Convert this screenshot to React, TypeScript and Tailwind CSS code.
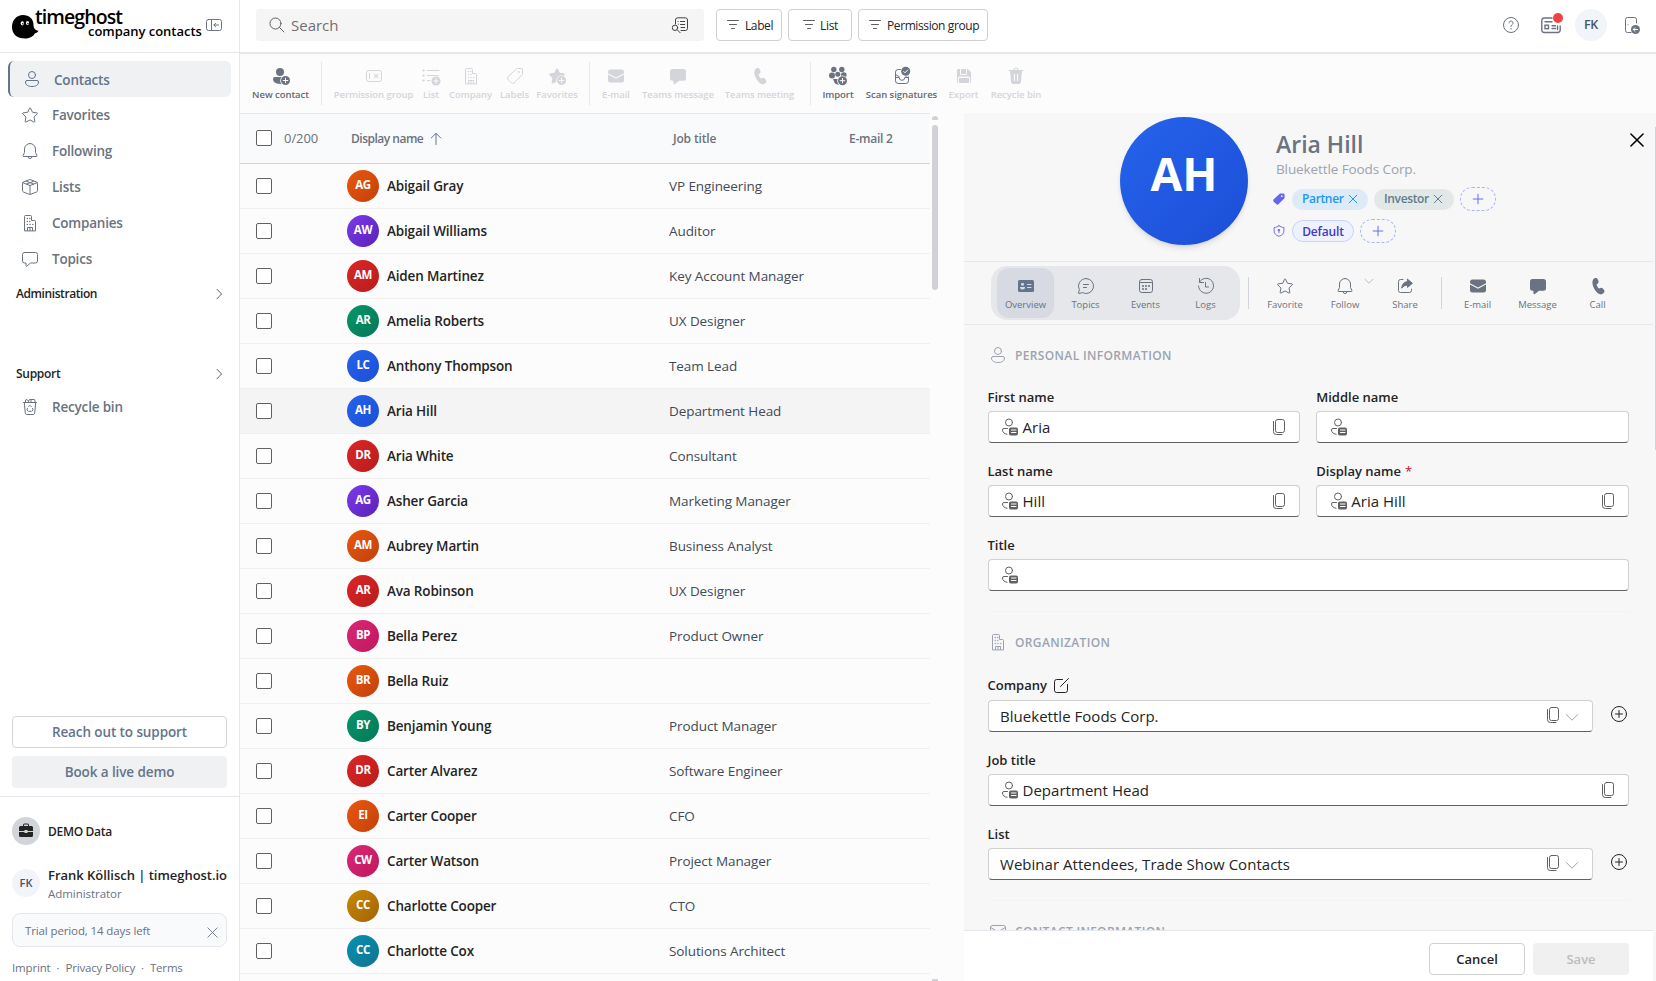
import React from "react";

type P = { className?: string; sw?: number; size?: number; children?: React.ReactNode };

function Svg({ className = "", sw = 1, size = 20, children }: P) {
  return (
    <svg
      width={size}
      height={size}
      viewBox="0 0 20 20"
      fill="none"
      stroke="currentColor"
      strokeWidth={sw}
      strokeLinecap="round"
      strokeLinejoin="round"
      className={`shrink-0 ${className}`}
    >
      {children}
    </svg>
  );
}

const solid = { fill: "currentColor", stroke: "none" };
const STAR =
  "M9.55 3.1a.5.5 0 0 1 .9 0l2.05 4.15 4.58.67a.5.5 0 0 1 .28.85L14.04 12l.79 4.56a.5.5 0 0 1-.73.53L10 14.94l-4.1 2.15a.5.5 0 0 1-.73-.53L5.96 12 2.64 8.77a.5.5 0 0 1 .28-.85l4.58-.67z";

const PersonI = (p: P) => (
  <Svg {...p}>
    <circle cx="10" cy="6" r="3.5" />
    <path d="M5 11.5h10a1.5 1.5 0 0 1 1.5 1.5c0 3-2.7 4.5-6.5 4.5S3.5 16 3.5 13A1.5 1.5 0 0 1 5 11.5z" />
  </Svg>
);
const StarI = (p: P) => (
  <Svg {...p}>
    <path d={STAR} />
  </Svg>
);
const BellI = (p: P) => (
  <Svg {...p}>
    <path d="M10 2.5a5.5 5.5 0 0 1 5.5 5.5v3.5l1.4 3a.7.7 0 0 1-.6 1H3.7a.7.7 0 0 1-.6-1l1.4-3V8A5.5 5.5 0 0 1 10 2.5z" />
    <path d="M8 15.6a2 2 0 0 0 4 0" />
  </Svg>
);
const BoxI = (p: P) => (
  <Svg {...p}>
    <path d="M9.3 2.7a2 2 0 0 1 1.4 0l5.9 2.3c.5.2.9.7.9 1.3v7.4c0 .6-.4 1.1-.9 1.3l-5.9 2.3a2 2 0 0 1-1.4 0L3.4 15c-.5-.2-.9-.7-.9-1.3V6.3c0-.6.4-1.1.9-1.3z" />
    <path d="M2.8 5.7 10 8.5l7.2-2.8M10 8.5v8.9M6.2 4.1l7.3 2.9M6.5 7.1l7.1-2.8" />
  </Svg>
);
const BuildingI = (p: P) => (
  <Svg {...p}>
    <path d="M4.5 17.5v-14a1 1 0 0 1 1-1h5a1 1 0 0 1 1 1v4h3a1 1 0 0 1 1 1v9z" />
    <path d="M7.5 17.5v-3h5v3M10 14.5v3" />
    <g {...solid}>
      <circle cx="7.3" cy="5.5" r=".75" />
      <circle cx="7.3" cy="8.5" r=".75" />
      <circle cx="7.3" cy="11.5" r=".75" />
      <circle cx="9.8" cy="8.5" r=".75" />
      <circle cx="9.8" cy="5.5" r=".75" />
      <circle cx="10" cy="11.5" r=".75" />
      <circle cx="12.8" cy="11.5" r=".75" />
    </g>
  </Svg>
);
const CommentI = (p: P) => (
  <Svg {...p}>
    <path d="M4.5 3.5h11a2 2 0 0 1 2 2v6.5a2 2 0 0 1-2 2h-5l-3.7 3.2a.5.5 0 0 1-.8-.4V14H4.5a2 2 0 0 1-2-2V5.5a2 2 0 0 1 2-2z" />
  </Svg>
);
const CommentSolid = (p: P) => (
  <Svg {...p}>
    <path
      {...solid}
      d="M4.5 3h11A2.5 2.5 0 0 1 18 5.5v6.7a2.5 2.5 0 0 1-2.5 2.5h-4.4l-4.2 3.2a1 1 0 0 1-1.5-.8v-2.4h-.9A2.5 2.5 0 0 1 2 12.2V5.5A2.5 2.5 0 0 1 4.5 3z"
    />
  </Svg>
);
const BinI = (p: P) => (
  <Svg {...p}>
    <path d="M3.5 5.5h13M4.3 5.5l1 10.7a1.5 1.5 0 0 0 1.5 1.3h6.4a1.5 1.5 0 0 0 1.5-1.3l1-10.7" />
    <path d="M5.5 5.2V3l1.5-.5 1.5 1.7M8 5.2l1.5-2.7H14a1 1 0 0 1 1 1v1.7M11 2.7V5" />
    <path d="M8.7 9.6 10 8.3l1.3 1.3M7.5 11.3l-.6 1.6.9 1.1M12.5 11.3l.6 1.6-.9 1.1M8.8 14.3h2.4" />
  </Svg>
);
const ChevR = (p: P) => (
  <Svg {...p}>
    <path d="m8 5.3 4.6 4.7L8 14.7" />
  </Svg>
);
const ChevD = (p: P) => (
  <Svg {...p}>
    <path d="m4.3 7.5 5.7 5.7 5.7-5.7" />
  </Svg>
);
const XI = (p: P) => (
  <Svg {...p}>
    <path d="m4.5 4.5 11 11M15.5 4.5l-11 11" />
  </Svg>
);
const PlusI = (p: P) => (
  <Svg {...p}>
    <path d="M10 4v12M4 10h12" />
  </Svg>
);
const PanelI = (p: P) => (
  <Svg {...p}>
    <rect x="2.5" y="4.5" width="15" height="11" rx="2" />
    <path d="M7.5 4.5v11M14.5 10H10M11.6 8.3 9.9 10l1.7 1.7" />
  </Svg>
);
const SearchI = (p: P) => (
  <Svg {...p}>
    <circle cx="8.5" cy="8.5" r="5.5" />
    <path d="m12.5 12.5 4.5 4.5" />
  </Svg>
);
const SearchListI = (p: P) => (
  <Svg {...p}>
    <path d="M5.5 9V5a2.2 2.2 0 0 1 2.2-2.2h7.6A2.2 2.2 0 0 1 17.5 5v8.3a2.2 2.2 0 0 1-2.2 2.2H11" />
    <path d="M10.5 6.5h4.2M10.5 9.5h4.2M11 12.5h3.7M8 6.5h.1M8.2 9.2h.1" />
    <circle cx="5" cy="12.8" r="2.7" />
    <path d="m7.2 14.8 3 3" />
  </Svg>
);
const FilterI = (p: P) => (
  <Svg {...p}>
    <path d="M4.5 5.5h11M6.5 9.5h7M8.5 13.5h3" />
  </Svg>
);
const HelpI = (p: P) => (
  <Svg {...p}>
    <circle cx="10" cy="10" r="7.5" />
    <path d="M8 8a2 2 0 1 1 3.2 1.6c-.7.6-1.2 1-1.2 1.9" />
    <circle cx="10" cy="13.7" r=".7" {...solid} />
  </Svg>
);
const IdI = (p: P) => (
  <Svg {...p}>
    <rect x="2.5" y="4.5" width="15" height="11" rx="2.2" />
    <path d="M5.5 7.5v5" />
    <rect x="10.5" y="8.5" width="3.5" height="3" {...solid} opacity=".75" />
    <path d="M10 7.9l.6.6M14.5 7.9l-.6.6M10 12.1l.6-.6M14.5 12.1l-.6-.6" />
  </Svg>
);
const Badge = ({ bg = "#fcfcfc", cx = 15, cy = 14.5 }: { bg?: string; cx?: number; cy?: number }) => (
  <g>
    <circle cx={cx} cy={cy} r="5.3" fill={bg} stroke="none" />
    <circle cx={cx} cy={cy} r="4.5" fill="currentColor" stroke="none" />
    <path d={`M${cx - 2.3} ${cy}h4.6M${cx} ${cy - 2.3}v4.6`} stroke={bg} />
  </g>
);
const PersonAdd = (p: P) => (
  <Svg {...p}>
    <circle cx="9" cy="6" r="4" {...solid} />
    <path {...solid} d="M4 11h11v6.7c-5 1.2-13 .3-13-4.7a2 2 0 0 1 2-2z" />
    <Badge cx={14.5} cy={14.5} />
  </Svg>
);
const ListAdd = (p: P) => (
  <Svg {...p}>
    <path d="M6.5 4.5H18M6.5 9.5H17M6.5 14.5H9" strokeWidth="1.2" />
    <path d="M2.3 4.5h.4M2.3 9.5h.4M2.3 14.5h.4" strokeWidth="2" />
    <Badge cx={15} cy={15} />
  </Svg>
);
const TagI = (p: P) => (
  <Svg {...p}>
    <path d="M11.4 2.9a1.5 1.5 0 0 1 1-.4h4.1a1 1 0 0 1 1 1v4.1c0 .4-.2.8-.4 1.1l-8 8.1a2 2 0 0 1-2.9 0L3 13.5a2 2 0 0 1 0-2.8z" />
    <circle cx="14" cy="6" r=".9" {...solid} />
  </Svg>
);
const TagSolid = (p: P) => (
  <Svg {...p}>
    <path
      fillRule="evenodd"
      {...solid}
      d="M11 2.5c.3-.3.8-.5 1.3-.5H16a2 2 0 0 1 2 2v4c0 .5-.2.9-.5 1.3l-8 8a2.5 2.5 0 0 1-3.5 0l-3.500-3.500a2.500 2.500 0 0 1 0-3.500zM14 7.200a1.200 1.200 0 1 0 0-2.400 1.200 1.200 0 0 0 0 2.400z"
    />
  </Svg>
);
const StarAdd = (p: P) => (
  <Svg {...p}>
    <path d={STAR} fill="currentColor" />
    <Badge cx={14.5} cy={14.5} />
  </Svg>
);
const MailSolid = (p: P) => (
  <Svg {...p}>
    <path {...solid} d="M2 7.2V6a2.5 2.5 0 0 1 2.5-2.5h11A2.5 2.5 0 0 1 18 6v1.2l-8 4.3z" />
    <path {...solid} d="M2 8.4v5.6a2.5 2.5 0 0 0 2.5 2.5h11A2.5 2.5 0 0 0 18 14V8.4l-8 4.3z" />
  </Svg>
);
const MailI = (p: P) => (
  <Svg {...p}>
    <rect x="2.5" y="4.5" width="15" height="11" rx="2" />
    <path d="m2.7 6.5 7.3 4.3 7.3-4.3" />
  </Svg>
);
const PhoneSolid = (p: P) => (
  <Svg {...p}>
    <path
      {...solid}
      d="m6.06 2.4.99-.3c1.1-.33 2.2.2 2.64 1.2l.7 1.56c.38.86.18 1.9-.5 2.53L8.6 8.6c-.1.1.3 1.1.9 2.1.6 1 1.2 1.7 1.4 1.7l1.7-.5c.9-.3 1.8 0 2.4.8l1.03 1.4c.65.86.53 2.08-.27 2.8l-.75.7a3 3 0 0 1-2.86.7c-2.14-.6-4.06-2.4-5.78-5.4C4.64 9.9 4.05 7.3 4.59 5.1a3 3 0 0 1 1.47-2.7z"
    />
  </Svg>
);
const PeopleAdd = (p: P) => (
  <Svg {...p}>
    <g {...solid}>
      <circle cx="5.8" cy="3.5" r="2.7" />
      <circle cx="13.8" cy="3.5" r="2.7" />
      <circle cx="9.8" cy="8.3" r="2.5" />
      <circle cx="4" cy="9.5" r="3" />
      <circle cx="15.8" cy="9" r="2.8" />
      <path d="M5 13h9v5.5c-4 1-7.5-.5-8-3z" />
    </g>
    <Badge cx={14.5} cy={14.7} />
  </Svg>
);
const ScanI = (p: P) => (
  <Svg {...p}>
    <path d="M9 3.5H6.2A2.7 2.7 0 0 0 3.5 6.2v8.6a2.7 2.7 0 0 0 2.7 2.7h7.6a2.7 2.7 0 0 0 2.7-2.7V11M3.5 11.5h3.7a2.8 2.8 0 0 0 5.6 0h3.7" />
    <path d="M3.8 8.8 7 10.500M16.200 9.500 13.500 10.700" />
    <circle cx="13.7" cy="5.3" r="5.2" fill="#fcfcfc" stroke="none" />
    <circle cx="13.7" cy="5.3" r="4.5" {...solid} />
    <path d="m11.7 5.5 1.3 1.3 2.7-2.8" stroke="#fcfcfc" />
  </Svg>
);
const SaveI = (p: P) => (
  <Svg {...p}>
    <path
      {...solid}
      d="M3 4.5A1.5 1.5 0 0 1 4.5 3H6v4.5A1.5 1.5 0 0 0 7.5 9h4A1.5 1.5 0 0 0 13 7.5V3h.8L17 6v9.500a1.500 1.500 0 0 1-1 1.500v-5a1.500 1.500 0 0 0-1.500-1.500h-9A1.500 1.500 0 0 0 4 12v5a1.500 1.500 0 0 1-1-1.500zM7 3h5v4.500a.5.5 0 0 1-.5.5h-4a.5.5 0 0 1-.5-.5zM5 12.500a.5.5 0 0 1 .5-.5h9a.5.5 0 0 1 .5.5V17H5z"
    />
  </Svg>
);
const TrashSolid = (p: P) => (
  <Svg {...p}>
    <path d="M8 4a2 2 0 0 1 4 0M3 4.5h14" strokeWidth="1.2" />
    <path fillRule="evenodd" {...solid} d="M4 5h12l-1.1 11a2.2 2.2 0 0 1-2.2 2H7.3a2.2 2.2 0 0 1-2.2-2zm4 3v7h1V8zm3 0v7h1V8z" />
  </Svg>
);
const CardSolid = (p: P) => (
  <Svg {...p}>
    <rect x="2" y="4" width="16" height="12" rx="1.5" {...solid} />
    <g fill="#d7dae2" stroke="none">
      <circle cx="6.5" cy="8.3" r="1.5" />
      <path d="M4 11h5c.2 1.7-1 2.5-2.5 2.5S3.8 12.7 4 11z" />
    </g>
    <path d="M11.5 8.5h3.5M11.5 11.5h3.5" stroke="#d7dae2" />
  </Svg>
);
const ChatI = (p: P) => (
  <Svg {...p}>
    <path d="M10 2.5a7.5 7.5 0 1 1-3.5 14.1l-3.6.9a.3.3 0 0 1-.4-.4l.9-3.6A7.5 7.5 0 0 1 10 2.5zM7.5 8.5h5M7.5 11.5h3" />
  </Svg>
);
const CalI = (p: P) => (
  <Svg {...p}>
    <rect x="3.5" y="3.5" width="13" height="13" rx="2.2" />
    <path d="M3.5 6.5h13" />
    <g {...solid} opacity=".75">
      <rect x="6" y="9" width="2" height="2" />
      <rect x="9" y="9" width="2" height="2" />
      <rect x="12" y="9" width="2" height="2" />
      <rect x="6" y="12" width="2" height="2" />
      <rect x="9" y="12" width="2" height="2" />
    </g>
  </Svg>
);
const HistoryI = (p: P) => (
  <Svg {...p}>
    <path d="M3.5 6A7.5 7.5 0 1 1 2.5 10M3.5 2.5v4h4M9.5 6.5v4.5h3" />
  </Svg>
);
const ShareI = (p: P) => (
  <Svg {...p}>
    <path d="M8 3.5H5.5a2 2 0 0 0-2 2v9a2 2 0 0 0 2 2h9a2 2 0 0 0 2-2v-1.3" />
    <path
      {...solid}
      stroke="currentColor"
      d="m12.5 3.2 4.9 4.1-4.9 4.1V9.2c-2.6 0-4.3 1-5.8 3 .3-4 2.3-6.3 5.8-6.7z"
    />
  </Svg>
);
const ShieldI = (p: P) => (
  <Svg {...p}>
    <path d="M10 2.5c2 1.5 4.2 2.2 7 2.5v5c0 3.7-2.3 6-7 7.6C5.3 16 3 13.7 3 10V5c2.8-.3 5-1 7-2.5z" />
    <path d="M10 8v4.5M9.2 8h1.6v1.5H9.2z" />
  </Svg>
);
const PersonCardI = (p: P) => (
  <Svg {...p}>
    <circle cx="9" cy="5.5" r="3.5" />
    <path d="M7.5 11.5H4A1.5 1.5 0 0 0 2.5 13c0 2.3 1.9 3.9 4.6 4.3" />
    <rect x="9" y="10.5" width="9" height="8" rx="1.8" {...solid} />
    <path d="M11.5 13h4.5M11.5 15.5h4.5" stroke="#fff" />
  </Svg>
);
const CopyI = (p: P) => (
  <Svg {...p}>
    <rect x="6.5" y="2.5" width="9" height="13" rx="2" />
    <path d="M4.5 4.5v10.2a2.8 2.8 0 0 0 2.8 2.8H13" />
  </Svg>
);
const EditI = (p: P) => (
  <Svg {...p}>
    <path d="M11.5 3.5H5.7a2.2 2.2 0 0 0-2.2 2.2v8.6a2.2 2.2 0 0 0 2.2 2.2h8.6a2.2 2.2 0 0 0 2.2-2.2V8.5M9.5 10.5l8-8" />
  </Svg>
);
const AddCircleI = (p: P) => (
  <Svg {...p}>
    <circle cx="10" cy="10" r="7.5" />
    <path d="M10 6.5v7M6.5 10h7" />
  </Svg>
);
const ArrowUpI = (p: P) => (
  <Svg {...p}>
    <path d="M10 4.5V15.5M5.3 9 10 4.3 14.7 9" />
  </Svg>
);

const nav: [string, (p: P) => React.JSX.Element][] = [
  ["Favorites", StarI],
  ["Following", BellI],
  ["Lists", BoxI],
  ["Companies", BuildingI],
  ["Topics", CommentI],
];

const O = "from-[#ea580c] to-[#c2410c]";
const V = "from-[#7c3aed] to-[#5b21b6]";
const R = "from-[#dc2626] to-[#b91c1c]";
const G = "from-[#059669] to-[#047857]";
const B = "from-[#2563eb] to-[#1d4ed8]";
const K = "from-[#db2777] to-[#be185d]";
const Y = "from-[#ca8a04] to-[#a16207]";
const C = "from-[#0891b2] to-[#0e7490]";
const rows: [string, string, string, string][] = [
  ["AG", O, "Abigail Gray", "VP Engineering"],
  ["AW", V, "Abigail Williams", "Auditor"],
  ["AM", R, "Aiden Martinez", "Key Account Manager"],
  ["AR", G, "Amelia Roberts", "UX Designer"],
  ["LC", B, "Anthony Thompson", "Team Lead"],
  ["AH", B, "Aria Hill", "Department Head"],
  ["DR", R, "Aria White", "Consultant"],
  ["AG", V, "Asher Garcia", "Marketing Manager"],
  ["AM", O, "Aubrey Martin", "Business Analyst"],
  ["AR", R, "Ava Robinson", "UX Designer"],
  ["BP", K, "Bella Perez", "Product Owner"],
  ["BR", O, "Bella Ruiz", ""],
  ["BY", G, "Benjamin Young", "Product Manager"],
  ["DR", R, "Carter Alvarez", "Software Engineer"],
  ["EI", O, "Carter Cooper", "CFO"],
  ["CW", K, "Carter Watson", "Project Manager"],
  ["CC", Y, "Charlotte Cooper", "CTO"],
  ["CC", C, "Charlotte Cox", "Solutions Architect"],
];

function Sidebar() {
  return (
    <aside className="flex w-60 shrink-0 flex-col border-r border-[#e5e7eb] bg-white">
      <div className="flex h-[53px] shrink-0 border-b border-[#e5e7eb] pl-3">
        <svg width="27" height="25" viewBox="0 0 27 25" className="mt-[15px] shrink-0">
          <path
            d="M11 0C17 0 21.5 4 21.5 9.5c0 3 .8 5.7 5 6.2-.8 1.5-2 2.3-3.5 2.6C21 22 17 23.5 13 23.5 5 23.5 0 19 0 12 0 5 4.5 0 11 0z"
            fill="#000"
          />
          <ellipse cx="10.3" cy="8.3" rx="1.6" ry="2.1" fill="#fff" />
          <ellipse cx="15.5" cy="8" rx="1.6" ry="2.1" fill="#fff" />
          <circle cx="10.8" cy="8.8" r=".7" />
          <circle cx="15.9" cy="8.5" r=".7" />
        </svg>
        <div className="-ml-[4px] flex w-[168px] flex-col pt-[6px] text-black">
          <div className="h-[17px] text-[19.5px] leading-[22px] font-semibold tracking-[-0.92px] whitespace-nowrap">timeghost</div>
          <div className="pl-[53px] text-[13px] leading-4 font-semibold tracking-[-0.03px] whitespace-nowrap">company contacts</div>
        </div>
        <PanelI className="mt-[15px] ml-[1px] text-[#6b7280]" />
      </div>
      <div className="flex flex-col pt-2 text-[13.5px] font-semibold text-[#6b7280]">
        <div className="ml-2 flex h-9 w-[223px] items-center rounded-md border-l-2 border-[#64748b] bg-[#eff1f3] pl-3 text-[#64748b]">
          <PersonI />
          <span className="ml-3 pt-[2px] tracking-[-0.2px]">Contacts</span>
        </div>
        {nav.map(([t, I]) => (
          <div key={t} className="flex h-9 items-center pl-5">
            <I />
            <span className="ml-3 pt-px tracking-[-0.22px]">{t}</span>
          </div>
        ))}
      </div>
      <div className="flex h-[34px] items-center justify-between pr-[10px] pl-4 text-xs font-semibold tracking-[-0.42px] text-[#242424]">
        Administration
        <ChevR className="text-[#616161]" />
      </div>
      <div className="mt-[46px] flex h-[34px] items-center justify-between pr-[10px] pl-4 text-xs font-semibold tracking-[-0.28px] text-[#242424]">
        Support
        <ChevR className="text-[#616161]" />
      </div>
      <div className="-mt-[2px] flex h-9 items-center pl-5 text-[13.5px] font-semibold text-[#6b7280]">
        <BinI />
        <span className="ml-3 tracking-[-0.18px]">Recycle bin</span>
      </div>
      <div className="flex-1" />
      <div className="flex flex-col gap-2 border-b border-[#e5e7eb] px-3 pb-2 text-[13.5px] font-semibold tracking-[-0.1px] text-[#64748b]">
        <div className="flex h-8 items-center justify-center rounded border border-[#d1d5db]">Reach out to support</div>
        <div className="flex h-8 items-center justify-center rounded bg-[#eff1f3]">Book a live demo</div>
      </div>
      <div className="flex h-[184px] shrink-0 flex-col px-3 pt-5">
        <div className="flex h-7 items-center gap-2">
          <div className="flex size-7 items-center justify-center rounded-full bg-[#d1d5db]">
            <svg width="16" height="16" viewBox="0 0 16 16" fill="#242424">
              <path d="M5 3V2a1.5 1.5 0 0 1 1.5-1.5h3A1.5 1.5 0 0 1 11 2v1h2.5A1.5 1.5 0 0 1 15 4.5V8h-5.5V7h-3v1H1V4.5A1.5 1.5 0 0 1 2.5 3zm1 0h4V2a.5.5 0 0 0-.5-.5h-3A.5.5 0 0 0 6 2zM1 9h5.5v1h3V9H15v3.5a1.5 1.5 0 0 1-1.5 1.5h-11A1.5 1.5 0 0 1 1 12.5z" />
            </svg>
          </div>
          <span className="pt-[2px] text-xs font-semibold tracking-[-0.3px] text-[#242424]">DEMO Data</span>
        </div>
        <div className="mt-[19px] flex h-[40px] items-start gap-2">
          <div className="mt-[5px] flex size-7 shrink-0 items-center justify-center rounded-full bg-[#f1f5f9] text-[11px] font-semibold text-[#475569]">
            FK
          </div>
          <div className="flex flex-col pt-px whitespace-nowrap">
            <span className="text-[13px] leading-5 font-semibold tracking-[-0.03px] text-[#242424]">Frank Köllisch | timeghost.io</span>
            <span className="text-[11.5px] leading-[18px] tracking-[-0.05px] text-[#6b7280]">Administrator</span>
          </div>
        </div>
        <div className="mt-[9px] flex h-[34px] items-center justify-between rounded-lg border border-[#e5e7eb] bg-[#f9fafb] pr-[5px] pl-3 text-[11.5px] tracking-[-0.12px] text-[#6b7280]">
          <span className="pt-px">Trial period, 14 days left</span>
          <XI size={17} className="mt-1" />
        </div>
        <div className="mt-[13px] flex h-4 items-center gap-[6px] text-[11.5px] tracking-[-0.16px] text-[#6b7280]">
          <span>Imprint</span>
          <span>·</span>
          <span>Privacy Policy</span>
          <span>·</span>
          <span>Terms</span>
        </div>
      </div>
    </aside>
  );
}

function Header() {
  const chip = "flex h-8 items-center rounded border border-[#d1d1d1] bg-white text-xs text-[#242424]";
  return (
    <header className="flex h-[54px] shrink-0 items-start border-b-2 border-[#e5e7eb] bg-white pt-[9px] pl-4">
      <div className="flex h-8 w-[448px] items-center rounded bg-[#f5f5f5] pr-[14px] pl-[11px] text-[#616161]">
        <SearchI />
        <span className="ml-1 flex-1 text-[15px] text-[#707070]">Search</span>
        <SearchListI className="text-[#424242]" />
      </div>
      <div className={`ml-3 w-[66px] pl-[6px] ${chip}`}>
        <FilterI className="text-[#616161]" />
        <span className="ml-[2px] pt-[2px] tracking-[-0.4px]">Label</span>
      </div>
      <div className={`ml-[6px] w-16 pl-[10px] ${chip}`}>
        <FilterI className="text-[#616161]" />
        <span className="ml-[1px] pt-[2px] tracking-[-0.3px]">List</span>
      </div>
      <div className={`ml-[6px] w-[130px] pl-[6px] ${chip}`}>
        <FilterI className="text-[#616161]" />
        <span className="ml-[2px] pt-[2px] tracking-[-0.4px] whitespace-nowrap">Permission group</span>
      </div>
      <div className="flex-1" />
      <div className="flex h-8 items-center text-[#6b7280]">
        <HelpI />
        <div className="relative ml-5 flex">
          <svg width="20" height="17" viewBox="0 0 20 17" fill="none" stroke="currentColor" strokeWidth="1.4" strokeLinecap="round">
            <path d="M11 1H3a2.2 2.2 0 0 0-2.2 2.2v10.1a2.2 2.2 0 0 0 2.2 2.2h14a2.2 2.2 0 0 0 2.2-2.2V9M16.5 9v3.5M4 4.7h7M11 8.7h3.5M11 11.5h3.5" />
            <rect x="4" y="8.2" width="3.5" height="3.5" />
          </svg>
          <span className="absolute -top-[4px] left-[12px] size-[10px] rounded-full bg-[#ef4444]" />
        </div>
        <div className="ml-[14px] flex size-8 items-center justify-center rounded-full bg-[#f1f5f9] text-[12.5px] font-semibold tracking-[-0.3px] text-[#475569]">
          FK
        </div>
        <Svg className="mr-[14px] ml-[15px]">
          <path d="M9 17.5H5.5a2 2 0 0 1-2-2v-11a2 2 0 0 1 2-2h7a2 2 0 0 1 2 2V8M6 9.8h.1" />
          <circle cx="13.5" cy="14.5" r="4.5" {...solid} />
          <path d="M15.8 14.5h-4.5M13 12.7l-1.8 1.8 1.8 1.8" stroke="#fff" />
        </Svg>
      </div>
    </header>
  );
}

function Tool({ I, t, w, on }: { I: (p: P) => React.JSX.Element; t: string; w: string; on?: boolean }) {
  return (
    <div className={`flex shrink-0 flex-col items-center ${w} ${on ? "text-[#6b7280]" : "text-[#d4d5da]"}`}>
      <I />
      <span
        className={`mt-[2px] text-[9.5px] leading-[14px] font-semibold tracking-[-0.05px] whitespace-nowrap ${on ? "text-[#64686f]" : ""}`}
      >
        {t}
      </span>
    </div>
  );
}

function Toolbar() {
  const div = "h-[43px] w-px shrink-0 self-start -mt-[4px] bg-[#e5e7eb]";
  return (
    <div className="flex h-[59px] shrink-0 items-start bg-[#fcfcfc] pt-3">
      <Tool I={PersonAdd} t="New contact" w="w-[81px]" on />
      <div className={div} />
      <Tool I={IdI} t="Permission group" w="w-[103px] -mr-2" />
      <Tool I={ListAdd} t="List" w="w-[28px]" />
      <Tool I={BuildingI} t="Company" w="w-[51px]" />
      <Tool I={TagI} t="Labels" w="w-[37px]" />
      <Tool I={StarAdd} t="Favorites" w="w-[48px]" />
      <div className={`${div} ml-[8px]`} />
      <Tool I={MailSolid} t="E-mail" w="w-[52px]" />
      <Tool I={CommentSolid} t="Teams message" w="w-[72px]" />
      <Tool I={PhoneSolid} t="Teams meeting" w="w-[91px]" />
      <div className={`${div} ml-[5px]`} />
      <Tool I={PeopleAdd} t="Import" w="w-[54px]" on />
      <Tool I={ScanI} t="Scan signatures" w="w-[73px]" on />
      <Tool I={SaveI} t="Export" w="w-[51px]" />
      <Tool I={TrashSolid} t="Recycle bin" w="w-[54px]" />
    </div>
  );
}

const box = "size-4 shrink-0 rounded-[2px] border border-[#616161] bg-white";

function Table() {
  return (
    <div className="flex w-[724px] shrink-0 bg-[#fcfcfc]">
      <div className="flex w-[690px] shrink-0 flex-col overflow-hidden">
        <div className="flex h-[51px] shrink-0 items-center border-t border-b border-t-[#e5e7eb] border-b-[#d1d5db] bg-[#f8fafc] pl-4 text-xs font-semibold text-[#6b7280]">
          <div className={`${box} -mt-px`} />
          <span className="ml-3 w-[67px] pt-px text-[13px] font-medium tracking-[-0.05px]">0/200</span>
          <span className="w-[75px] pt-px tracking-[-0.5px] whitespace-nowrap">Display name</span>
          <ArrowUpI className="text-[#64748b]" />
          <span className="ml-[227px] w-[176px] pt-px tracking-[-0.15px]">Job title</span>
          <span className="pt-px tracking-[-0.25px]">E-mail 2</span>
        </div>
        {rows.map(([i, g, n, j], k) => (
          <div
            key={k}
            className={`flex h-[45px] shrink-0 items-center border-b border-[#f0f0f0] pl-4 ${k === 5 ? "bg-[#f4f4f4]" : ""}`}
          >
            <div className={box} />
            <div
              className={`ml-[75px] flex size-8 items-center justify-center rounded-full bg-linear-135 pb-[3px] text-[11.5px] font-bold tracking-[-0.4px] text-white ${g}`}
            >
              {i}
            </div>
            <span className="ml-2 w-[282px] text-[13.5px] font-semibold tracking-[-0.16px] text-[#242424]">{n}</span>
            <span className="text-[13.5px] tracking-[-0.08px] text-[#424a57]">{j}</span>
          </div>
        ))}
      </div>
      <div className="ml-[2px] flex w-[6px] flex-col items-center pt-[3px]">
        <div className="h-[4px] w-[6px] rounded-t-full bg-[#d1d1d6]" />
        <div className="mt-[5px] h-[165px] w-[6px] rounded-full bg-[#d1d1d6]" />
        <div className="flex-1" />
        <div className="h-[2px] w-[6px] bg-[#d1d1d6]" />
      </div>
    </div>
  );
}

function Tab({ I, t, w = "w-[60px]", on }: { I: (p: P) => React.JSX.Element; t: string; w?: string; on?: boolean }) {
  return (
    <div
      className={`flex h-[50px] shrink-0 flex-col items-center rounded-xl pt-2 ${w} ${on ? "bg-[#d7dae2] text-[#64748b]" : "text-[#6b7280]"}`}
    >
      <I />
      <span className="mt-[1px] text-[9.5px] leading-[15px]">{t}</span>
    </div>
  );
}

function Field({
  label,
  value = "",
  person,
  copy,
  select,
  req,
  edit,
  w = "flex-1",
}: {
  label: string;
  value?: string;
  person?: boolean;
  copy?: boolean;
  select?: boolean;
  req?: boolean;
  edit?: boolean;
  w?: string;
}) {
  return (
    <div className={`flex h-[58px] flex-col ${w}`}>
      <div
        className={`flex h-[26px] shrink-0 items-start text-[13px] font-semibold text-[#242424] ${edit ? "leading-[22px]" : "leading-6"}`}
      >
        {label}
        {req && <span className="ml-[4px] font-normal text-[#c50f1f]">*</span>}
        {edit && <EditI className="mt-[2px] ml-[4px]" />}
      </div>
      <div className="flex h-8 items-center rounded border border-[#d1d1d1] border-b-[#616161] bg-white pl-[11.5px] text-[15px] text-[#242424]">
        {person && <PersonCardI className="mr-[2.5px] text-[#616161]" />}
        <span className="flex-1 tracking-[0.03px] whitespace-nowrap">{value}</span>
        {copy && <CopyI className={`text-[#616161] ${select ? "-mt-[2px] mr-[-1px]" : "mr-[10px]"}`} />}
        {select && <ChevD className="mt-[1px] mr-[10px] text-[#a3a3a3]" />}
      </div>
    </div>
  );
}

const sect = "flex h-5 items-center gap-[7.5px] text-xs font-semibold tracking-[0.36px] text-[#9ca3af]";

function Detail() {
  const pillAdd = "flex h-6 w-9 items-center justify-center rounded-full border border-dashed border-[#a5b4fc] text-[#6366f1]";
  return (
    <section className="flex flex-1 bg-[#f7f7f7]">
      <div className="flex w-[689px] flex-col">
        <div className="flex h-[149px] shrink-0 border-b border-[#e5e7eb] pl-[156px]">
          <div className="mt-1 flex size-32 shrink-0 items-center justify-center rounded-full bg-linear-135 from-[#2563eb] to-[#1d4ed8] pb-[16px] text-[46px] font-bold text-white shadow-md">
            AH
          </div>
          <div className="flex flex-1 flex-col pt-[16px] pl-6">
            <div className="pl-1 text-[23px] leading-[30px] font-semibold text-[#6b7280]">Aria Hill</div>
            <div className="mt-px pl-1 text-[13.5px] leading-[19px] tracking-[-0.1px] text-[#9ca3af]">Bluekettle Foods Corp.</div>
            <div className="mt-[8px] flex h-6 items-center gap-[6px] text-xs font-semibold">
              <TagSolid size={14} className="text-[#6366f1]" />
              <div className="flex h-[21px] w-[76px] items-center rounded-full bg-[#dcebf7] pl-[10px] tracking-[-0.35px] text-[#2196f3]">
                Partner
                <XI size={14} sw={1.4} className="ml-[2px]" />
              </div>
              <div className="flex h-[21px] w-20 items-center rounded-full bg-[#e2e7e8] pl-[10px] tracking-[-0.35px] text-[#607d8b]">
                Investor
                <XI size={14} sw={1.4} className="ml-[2px]" />
              </div>
              <div className={pillAdd}>
                <PlusI size={16} sw={1.2} />
              </div>
            </div>
            <div className="mt-2 flex h-6 items-center gap-[6px] text-xs font-semibold">
              <ShieldI size={14} sw={1.3} className="text-[#6366f1]" />
              <div className="flex h-[22px] w-[62px] items-center justify-center rounded-full border border-[#c7d2fe] bg-[#eef2ff] pt-px tracking-[-0.15px] text-[#4338ca]">
                Default
              </div>
              <div className={pillAdd}>
                <PlusI size={16} sw={1.2} />
              </div>
            </div>
          </div>
          <XI size={22} sw={1.4} className="mt-4 mr-[5px] text-black" />
        </div>
        <div className="flex h-[63px] shrink-0 items-center border-b border-[#e5e7eb] pl-[27px]">
          <div className="flex h-[54px] w-[249px] items-center rounded-2xl bg-[#e5e7eb] pl-[6px]">
            <Tab I={CardSolid} t="Overview" w="w-[57px] mr-[1.5px]" on />
            <Tab I={ChatI} t="Topics" />
            <Tab I={CalI} t="Events" />
            <Tab I={HistoryI} t="Logs" />
          </div>
          <div className="ml-2 h-8 w-px bg-[#d1d5db]" />
          <Tab I={StarI} t="Favorite" w="w-[60px] ml-[6px]" />
          <div className="relative">
            <Tab I={BellI} t="Follow" />
            <ChevD size={14} className="absolute top-[6px] right-[-1px] text-[#9ca3af]" />
          </div>
          <Tab I={ShareI} t="Share" />
          <div className="ml-[6px] h-8 w-px bg-[#d1d5db]" />
          <Tab I={MailSolid} t="E-mail" w="w-[60px] ml-[5.5px]" />
          <Tab I={CommentSolid} t="Message" />
          <Tab I={PhoneSolid} t="Call" />
        </div>
        <div className="flex h-[605px] shrink-0 flex-col overflow-hidden pr-6 pl-[23.5px]">
          <div className={`${sect} mt-5`}>
            <PersonI />
            <span className="pt-[2px]">PERSONAL INFORMATION</span>
          </div>
          <div className="mt-5 flex gap-4">
            <Field label="First name" value="Aria" person copy />
            <Field label="Middle name" person />
          </div>
          <div className="mt-4 flex gap-4">
            <Field label="Last name" value="Hill" person copy />
            <Field label="Display name" value="Aria Hill" person copy req />
          </div>
          <div className="mt-4 flex">
            <Field label="Title" person />
          </div>
          <div className="mt-5 h-px shrink-0 bg-[#f3f3f3]" />
          <div className={`${sect} mt-5`}>
            <BuildingI />
            <span className="pt-[2px]">ORGANIZATION</span>
          </div>
          <div className="mt-[22px] flex">
            <Field label="Company" value="Bluekettle Foods Corp." copy select edit w="w-[605.5px]" />
            <AddCircleI className="mt-[30px] ml-4 text-[#242424]" />
          </div>
          <div className="mt-4 flex">
            <Field label="Job title" value="Department Head" person copy />
          </div>
          <div className="mt-4 flex">
            <Field label="List" value="Webinar Attendees, Trade Show Contacts" copy select w="w-[605.5px]" />
            <AddCircleI className="mt-[30px] ml-4 text-[#242424]" />
          </div>
          <div className="mt-5 h-px shrink-0 bg-[#f3f3f3]" />
          <div className={`${sect} mt-5 shrink-0`}>
            <MailI />
            <span className="pt-[2px]">CONTACT INFORMATION</span>
          </div>
        </div>
        <div className="flex h-[51px] shrink-0 justify-end gap-2 border-t border-[#e5e7eb] bg-white pt-3 pr-6 text-[13px] font-semibold">
          <div className="flex h-8 w-24 items-center justify-center rounded border border-[#d1d1d1] pt-px text-[#242424]">Cancel</div>
          <div className="flex h-8 w-24 items-center justify-center rounded bg-[#f0f0f0] pt-px text-[#bdbdbd]">Save</div>
        </div>
      </div>
      <div className="mt-[14px] ml-[2px] h-[323px] w-px bg-[#d1d1d6]" />
    </section>
  );
}

export default function App() {
  return (
    <div className="flex h-[981px] w-[1656px] overflow-hidden bg-[#fcfcfc] font-['Open_Sans',sans-serif]">
      <Sidebar />
      <div className="flex w-[1416px] flex-col">
        <Header />
        <Toolbar />
        <div className="flex h-[868px] shrink-0">
          <Table />
          <Detail />
        </div>
      </div>
    </div>
  );
}
